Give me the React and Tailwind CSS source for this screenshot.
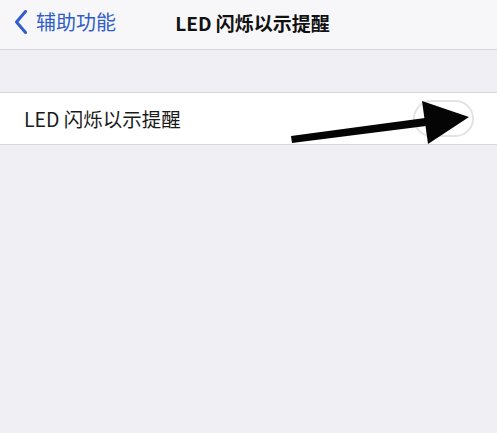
import React from 'react';

const font = { fontFamily: '"Noto Sans CJK SC", "Noto Sans", sans-serif' };

const Arrow = () => (
  <svg className="absolute left-0 top-0 pointer-events-none" width="497" height="433" viewBox="0 0 497 433">
    <polygon points="291,136 425,118 426,126 292,143" fill="#050505" />
    <polygon points="422,101 469,117 428,144" fill="#050505" />
  </svg>
);

const App = () => {
  return (
    <div className="relative h-[433px] w-[497px] overflow-hidden bg-[#efeff4]" style={font}>
      {/* Nav bar */}
      <header className="grid h-[50px] grid-cols-[1fr_auto_1fr] items-center border-b border-[#d8d8dc] bg-[#f7f7f9] pb-[5px]">
        <div className="flex items-center pl-[14px] text-[#2f5ec8]">
          <svg width="14" height="24" viewBox="0 0 14 24" className="mr-[8px]">
            <path d="M11.5 1.5 L2.5 12 L11.5 22.5" fill="none" stroke="currentColor" strokeWidth="3" strokeLinecap="round" strokeLinejoin="round" />
          </svg>
          <span className="text-[20px] leading-none">辅助功能</span>
        </div>
        <h1 className="ml-[8px] text-[19px] font-semibold leading-none text-[#111]">LED 闪烁以示提醒</h1>
        <div />
      </header>

      <div className="h-[42px]" />

      {/* Setting row */}
      <div className="flex h-[53px] items-center justify-between border-y border-[#d8d8dc] bg-white pl-[24px] pr-[23px]">
        <span className="text-[19.5px] leading-none text-[#1a1a1a]">LED 闪烁以示提醒</span>
        <div className="h-[37px] w-[61px] rounded-full border-2 border-[#e3e3e6] bg-white" />
      </div>

      <Arrow />
    </div>
  );
};

export default App;
